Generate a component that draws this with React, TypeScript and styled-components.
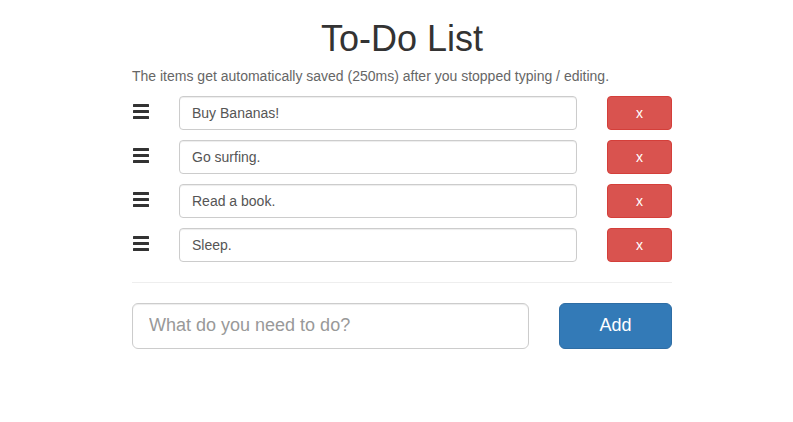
import React from "react";
import styled, { createGlobalStyle } from "styled-components";

const Global = createGlobalStyle`
  html, body { margin: 0; padding: 0; background: #fff; }
  body {
    font-family: "Liberation Sans", Arial, Helvetica, sans-serif;
    font-size: 14px;
    line-height: 1.42857;
    color: #333;
  }
  * { box-sizing: border-box; }
`;

const Page = styled.div`
  width: 540px;
  margin-left: calc(50% - 264.5px);
  padding-top: 19px;
`;

const Title = styled.h1`
  margin: 0 0 8px;
  font-size: 36px;
  font-weight: 500;
  line-height: 1.1;
  text-align: center;
  color: #333;
`;

const Note = styled.p`
  margin: 0 0 9px;
  color: #666;
  font-size: 14px;
`;

const List = styled.div`
  display: flex;
  flex-direction: column;
  gap: 10px;
`;

const Row = styled.div`
  display: grid;
  grid-template-columns: 47px 1fr 65px;
  align-items: center;
`;

const Handle = styled.div`
  display: flex;
  flex-direction: column;
  gap: 3px;
  width: 16px;
  margin-left: 1px;
  margin-top: -3px;
  cursor: move;
`;

const Bar = styled.span`
  display: block;
  height: 3px;
  background: #333;
  border-radius: 0.5px;
`;

const Input = styled.input<{ $lg?: boolean }>`
  display: block;
  width: 100%;
  height: ${(p) => (p.$lg ? "46px" : "34px")};
  padding: ${(p) => (p.$lg ? "10px 16px" : "6px 12px")};
  font-family: inherit;
  font-size: ${(p) => (p.$lg ? "18px" : "14px")};
  color: #555;
  background: #fff;
  border: 1px solid #ccc;
  border-radius: ${(p) => (p.$lg ? "6px" : "4px")};
  box-shadow: inset 0 1px 1px rgba(0, 0, 0, 0.075);
  outline: none;
  &::placeholder { color: #999; }
`;

const ItemInput = styled(Input)`
  width: calc(100% - 30px);
`;

const Button = styled.button<{ $variant: "danger" | "primary"; $lg?: boolean }>`
  height: ${(p) => (p.$lg ? "46px" : "34px")};
  width: 100%;
  padding: 0;
  font-family: inherit;
  font-size: ${(p) => (p.$lg ? "18px" : "14px")};
  color: #fff;
  border-radius: ${(p) => (p.$lg ? "6px" : "4px")};
  border: 1px solid ${(p) => (p.$variant === "danger" ? "#d43f3a" : "#2e6da4")};
  background: ${(p) => (p.$variant === "danger" ? "#d9534f" : "#337ab7")};
  cursor: pointer;
`;

const Divider = styled.hr`
  margin: 20px 0 20px;
  border: 0;
  border-top: 1px solid #eee;
`;

const AddRow = styled.div`
  display: grid;
  grid-template-columns: 397px 1fr;
  column-gap: 30px;
`;

const items = ["Buy Bananas!", "Go surfing.", "Read a book.", "Sleep."];

export default function App() {
  return (
    <>
      <Global />
      <Page>
        <Title>To-Do List</Title>
        <Note>The items get automatically saved (250ms) after you stopped typing / editing.</Note>
        <List>
          {items.map((t) => (
            <Row key={t}>
              <Handle>
                <Bar />
                <Bar />
                <Bar />
              </Handle>
              <ItemInput defaultValue={t} />
              <Button $variant="danger">x</Button>
            </Row>
          ))}
        </List>
        <Divider />
        <AddRow>
          <Input $lg placeholder="What do you need to do?" />
          <Button $variant="primary" $lg>Add</Button>
        </AddRow>
      </Page>
    </>
  );
}
